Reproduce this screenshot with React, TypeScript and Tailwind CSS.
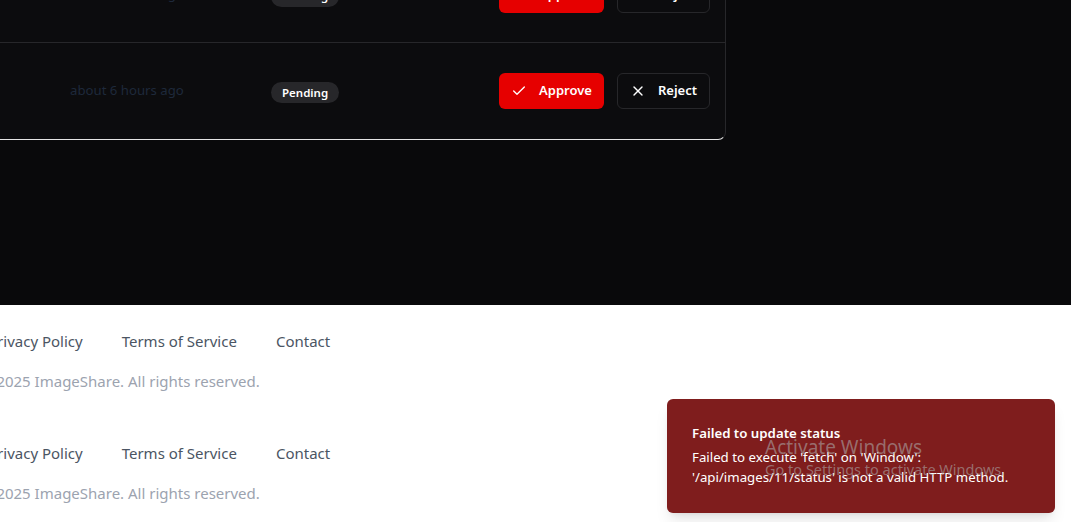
import { Check, X } from 'lucide-react';

const font = { fontFamily: '"Noto Sans", "Open Sans", Arial, sans-serif' };

const Row = ({ date }: { date: string }) => {
  return (
    <div className="flex items-center h-[96px] border-b border-[#27272a] last:border-b-0">
      <div className="w-[271px] pl-[70px] text-[13.2px] text-[#1e293b]">{date}</div>
      <div className="flex-1">
        <span className="inline-flex items-center h-[21px] px-[11px] rounded-full bg-[#27272a] text-white text-[11.5px] font-semibold">
          Pending
        </span>
      </div>
      <div className="flex items-center gap-[13px] pr-[15px]">
        <button className="flex items-center gap-3 h-9 px-3 rounded-md bg-[#e60000] text-white text-[13px] font-semibold">
          <Check size={16} strokeWidth={2} />
          Approve
        </button>
        <button className="flex items-center gap-3 h-9 px-3 rounded-md border border-[#27272a] text-white text-[13px] font-semibold">
          <X size={16} strokeWidth={2} />
          Reject
        </button>
      </div>
    </div>
  );
};

const Footer = () => {
  return (
    <footer className="py-6 flex flex-col gap-4 bg-white">
      <nav className="flex gap-[39px] -ml-[12px] text-[15px] leading-6 text-[#4b5563]">
        <a>Privacy Policy</a>
        <a>Terms of Service</a>
        <a>Contact</a>
      </nav>
      <p className="-ml-[20px] text-[15px] leading-6 text-[#9ca3af]">© 2025 ImageShare. All rights reserved.</p>
    </footer>
  );
};

const App = () => {
  return (
    <div className="relative min-h-screen bg-white overflow-hidden" style={font}>
      <section className="h-[305px] bg-[#09090b] overflow-hidden">
        <div className="w-[726px] -mt-[53px] bg-[#0c0c0e] border-b border-r border-[#27272a] border-b-[#e5e5e5] rounded-br-lg">
          <Row date="about 6 hours ago" />
          <Row date="about 6 hours ago" />
        </div>
      </section>

      <Footer />
      <Footer />

      <div className="absolute left-[667px] top-[399px] w-[388px] h-[114px] px-[25px] py-6 rounded-md bg-[#7f1d1d] text-white shadow-lg">
        <div className="text-[13.25px] leading-5 font-semibold">Failed to update status</div>
        <div className="mt-1 text-[13.25px] leading-5">
          Failed to execute 'fetch' on 'Window': '/api/images/11/status' is not a valid HTTP method.
        </div>
      </div>

      <div className="absolute left-[765px] top-[436px] pointer-events-none text-[rgba(170,165,165,0.6)] leading-tight">
        <div className="text-[19px]">Activate Windows</div>
        <div className="text-[14.5px]">Go to Settings to activate Windows.</div>
      </div>
    </div>
  );
};

export default App;
